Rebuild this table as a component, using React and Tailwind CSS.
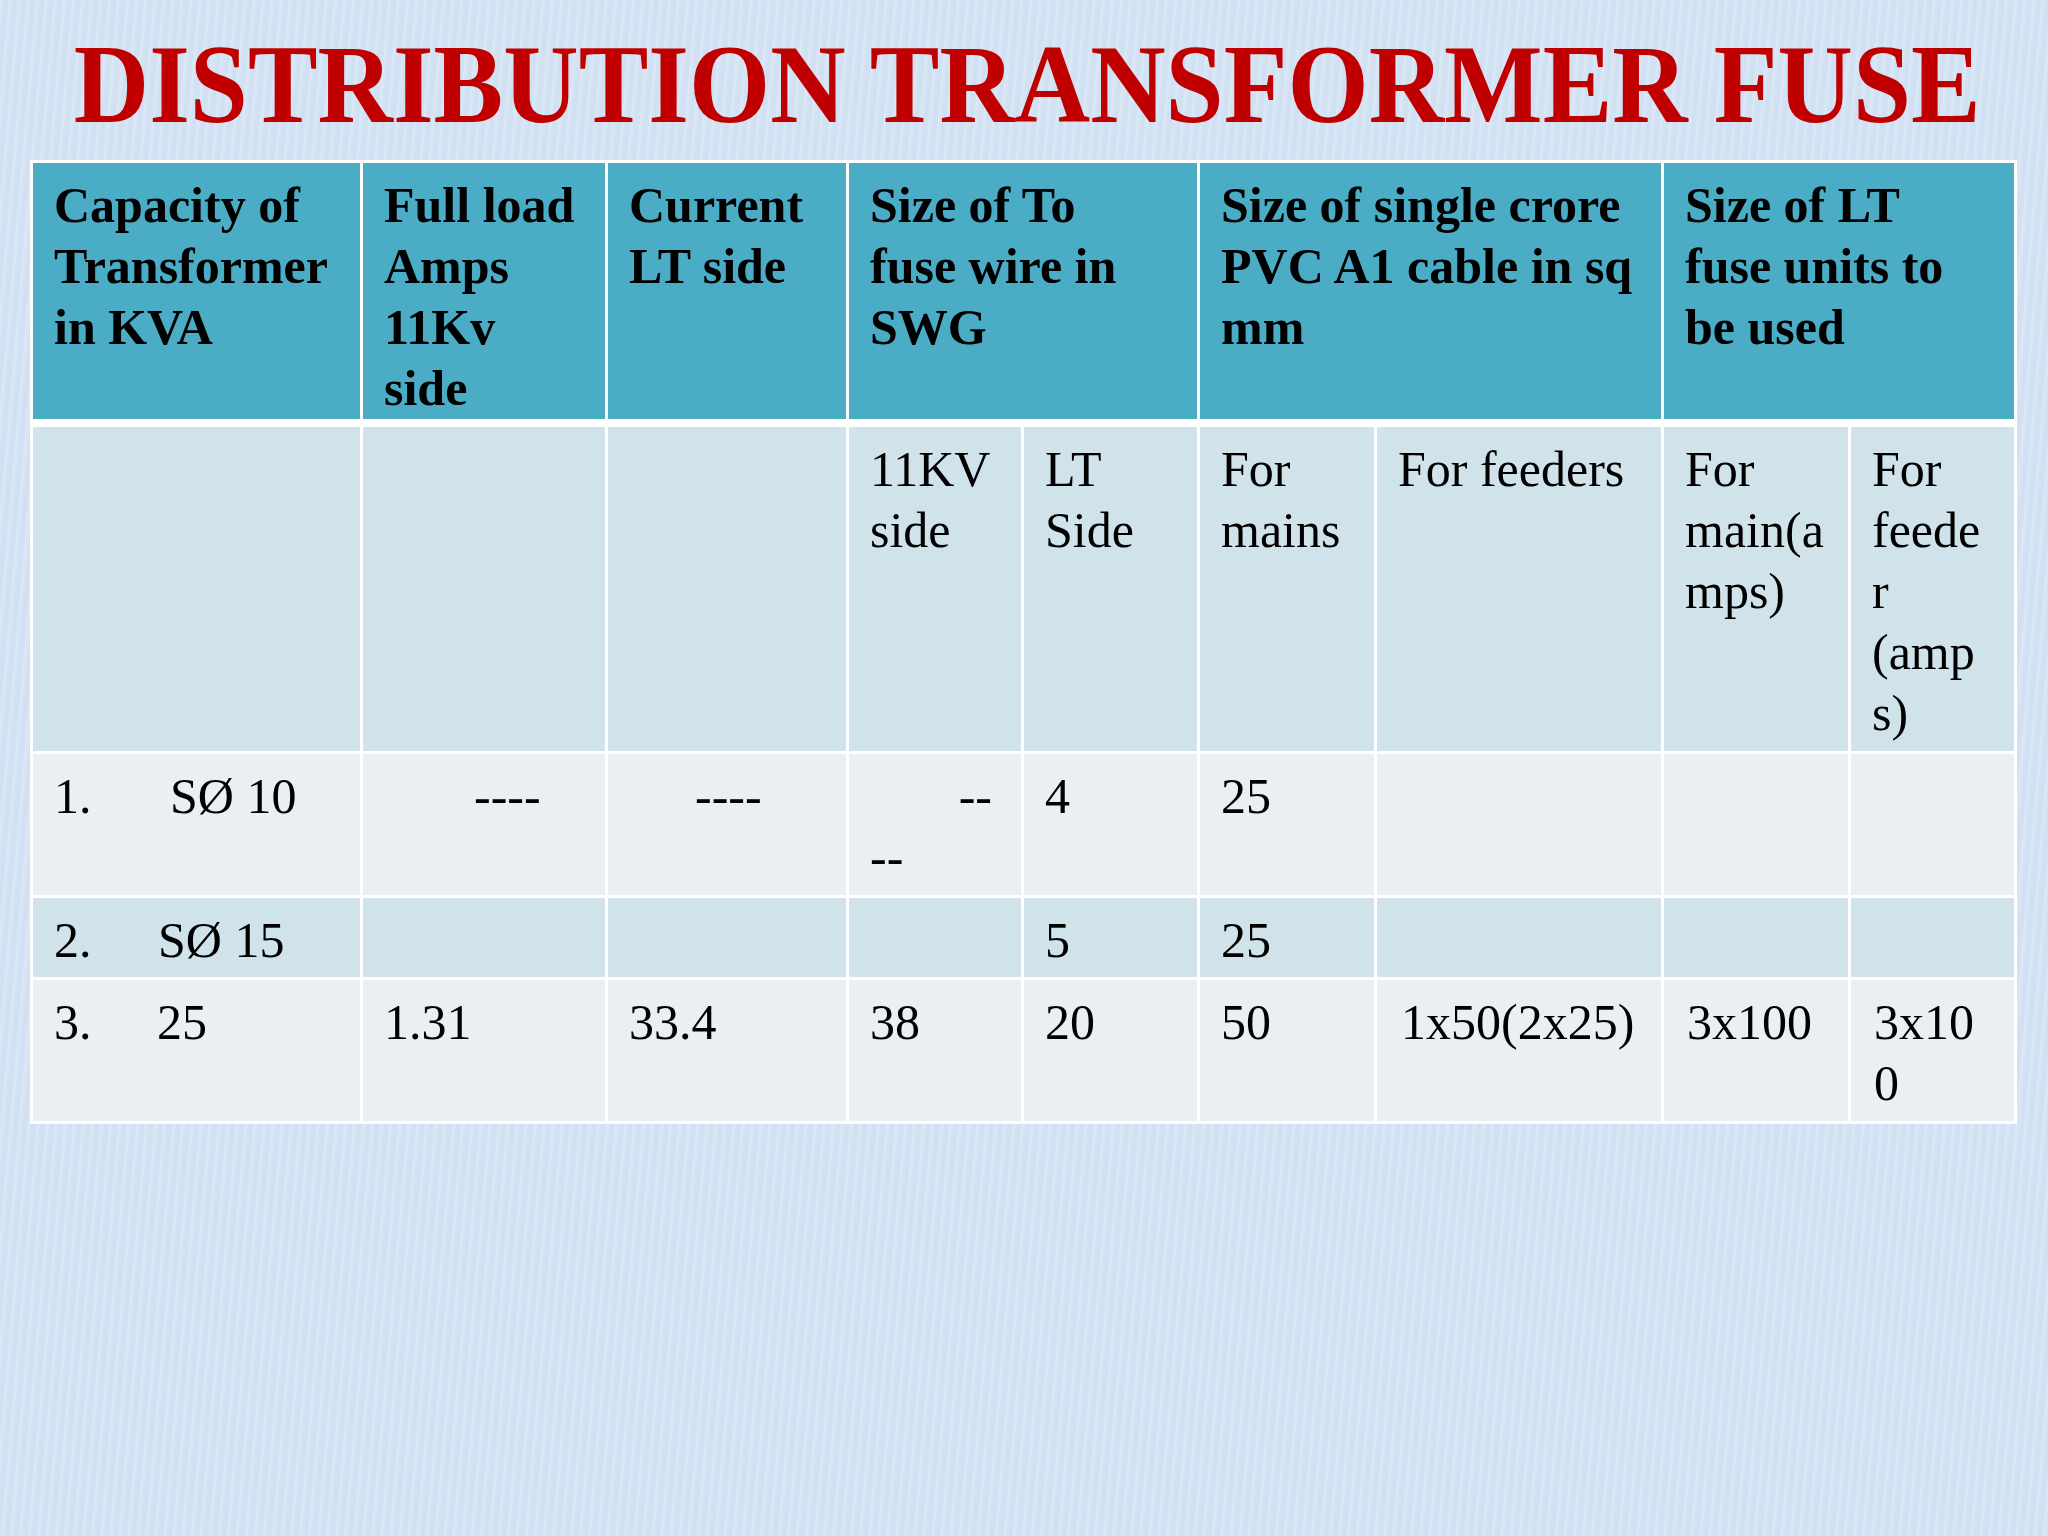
// Slide: distribution transformer fuse table
import React from 'react';

const serif = "font-['Liberation_Serif','Times_New_Roman',serif]";

const cols = [330, 245, 241, 175, 176, 177, 287, 187, 166];

const head = [
  { span: 1, lines: ['Capacity of', 'Transformer', 'in KVA'] },
  { span: 1, lines: ['Full load', 'Amps', '11Kv', 'side'] },
  { span: 1, lines: ['Current', 'LT side'] },
  { span: 2, lines: ['Size of To', 'fuse wire in', 'SWG'] },
  { span: 2, lines: ['Size of single crore', 'PVC A1 cable in sq', 'mm'] },
  { span: 2, lines: ['Size of LT', 'fuse units to', 'be used'] },
];

const sub = [
  [],
  [],
  [],
  ['11KV', 'side'],
  ['LT', 'Side'],
  ['For', 'mains'],
  ['For feeders'],
  ['For', 'main(a', 'mps)'],
  ['For', 'feede', 'r', '(amp', 's)'],
];

function Lines({ lines }) {
  return lines.map((l, i) => (
    <div key={i} className="whitespace-nowrap">
      {l}
    </div>
  ));
}

function Cell({ children, className = '', span = 1 }) {
  return (
    <td
      colSpan={span}
      className={`align-top border-r-[3px] border-b-[3px] border-white pl-[21px] pr-[8px] pt-[12px] ${className}`}
    >
      {children}
    </td>
  );
}

function Num({ n, w, v }) {
  return (
    <div className="flex whitespace-nowrap">
      <span className={w}>{n}</span>
      <span>{v}</span>
    </div>
  );
}

export default function App() {
  return (
    <div
      className={`w-[2048px] h-[1536px] bg-[#d5e4f4] bg-[repeating-linear-gradient(95deg,rgba(255,255,255,0.18)_0px,rgba(255,255,255,0)_3px,rgba(170,195,225,0.12)_6px,rgba(255,255,255,0)_9px)] ${serif} overflow-hidden`}
    >
      <div className="pt-[27px] h-[160px]">
        <h1 className="text-center text-[113px] leading-none font-bold text-[#c00000] scale-x-[0.924] -translate-x-[4px] whitespace-nowrap">
          DISTRIBUTION TRANSFORMER FUSE
        </h1>
      </div>

      <table className="ml-[30px] table-fixed border-separate border-spacing-0 border-l-[3px] border-t-[3px] border-white text-[50px] leading-[61px] text-black">
        <colgroup>
          {cols.map((w, i) => (
            <col key={i} style={{ width: w }} />
          ))}
        </colgroup>
        <tbody>
          <tr className="h-[262px] bg-[#4bacc6] font-bold">
            {head.map((h, i) => (
              <Cell key={i} span={h.span} className="border-b-[8px]">
                <Lines lines={h.lines} />
              </Cell>
            ))}
          </tr>

          <tr className="h-[327px] bg-[#d0e3ea]">
            {sub.map((s, i) => (
              <Cell key={i}>
                <Lines lines={s} />
              </Cell>
            ))}
          </tr>

          <tr className="h-[144px] bg-[#e9eff3]">
            <Cell>
              <Num n="1." w="w-[116px]" v="SØ 10" />
            </Cell>
            <Cell className="!pl-[111px]">----</Cell>
            <Cell className="!pl-[87px]">----</Cell>
            <Cell>
              <div className="text-right pr-[21px]">--</div>
              <div>--</div>
            </Cell>
            <Cell>4</Cell>
            <Cell>25</Cell>
            <Cell />
            <Cell />
            <Cell />
          </tr>

          <tr className="h-[82px] bg-[#d0e3ea]">
            <Cell>
              <Num n="2." w="w-[104px]" v="SØ 15" />
            </Cell>
            <Cell />
            <Cell />
            <Cell />
            <Cell>5</Cell>
            <Cell>25</Cell>
            <Cell />
            <Cell />
            <Cell />
          </tr>

          <tr className="h-[144px] bg-[#e9eff3]">
            <Cell>
              <Num n="3." w="w-[103px]" v="25" />
            </Cell>
            <Cell>1.31</Cell>
            <Cell>33.4</Cell>
            <Cell>38</Cell>
            <Cell>20</Cell>
            <Cell>50</Cell>
            <Cell className="!pl-[24px] whitespace-nowrap">1x50(2x25)</Cell>
            <Cell className="!pl-[23px]">3x100</Cell>
            <Cell className="!pl-[23px]">
              <Lines lines={['3x10', '0']} />
            </Cell>
          </tr>
        </tbody>
      </table>
    </div>
  );
}
